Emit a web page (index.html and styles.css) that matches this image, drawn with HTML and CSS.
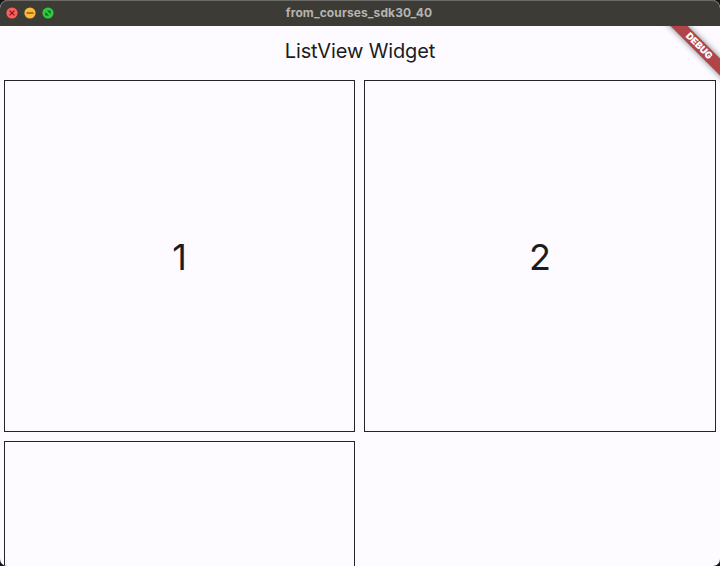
FILE: index.html
```html
<!DOCTYPE html>
<html lang="en">
<head>
<meta charset="utf-8">
<title>from_courses_sdk30_40</title>
<link rel="stylesheet" href="styles.css">
</head>
<body>
<div class="window">
  <header class="titlebar">
    <div class="controls">
      <svg class="control" viewBox="0 0 12 12"><circle cx="6" cy="6" r="5.6" fill="#fb5f5b"/><path d="M3.6 3.6l4.8 4.8M8.4 3.6l-4.8 4.8" stroke="#8c1716" stroke-width="1.3"/></svg>
      <svg class="control" viewBox="0 0 12 12"><circle cx="6" cy="6" r="5.6" fill="#fcb83a"/><path d="M2.5 6h7" stroke="#8f5910" stroke-width="1.4"/></svg>
      <svg class="control" viewBox="0 0 12 12"><circle cx="6" cy="6" r="5.6" fill="#2fc843"/><path d="M3.4 8.6V4.9l3.7 3.7zM4.9 3.4h3.7v3.7z" fill="#0c6519"/></svg>
    </div>
    <div class="window-title">from_courses_sdk30_40</div>
  </header>
  <main class="app">
    <h1 class="app-title"><span>ListView Widget</span></h1>
    <div class="grid">
      <div class="tile"><span>1</span></div>
      <div class="tile"><span>2</span></div>
      <div class="tile"></div>
    </div>
    <div class="banner">DEBUG</div>
  </main>
</div>
</body>
</html>
```
FILE: styles.css
```css
* { box-sizing: border-box; }
html, body { height: 100%; }
body {
  margin: 0;
  overflow: hidden;
  background: #16141a;
  font-family: Inter, "Liberation Sans", sans-serif;
  color: #1c1b20;
}
.window {
  height: 566px;
  display: flex;
  flex-direction: column;
  overflow: hidden;
  border-radius: 8px 8px 7px 7px;
  background: #fdfbff;
}
.titlebar {
  flex: none;
  height: 26px;
  display: grid;
  grid-template-columns: 60px 1fr 62px;
  align-items: center;
  background: #3c3b36;
  border-radius: 8px 8px 0 0;
  box-shadow: inset 0 1px 0 #6c6b67;
}
.controls { display: flex; gap: 6px; padding-left: 6px; }
.control { width: 12px; height: 12px; display: block; }
.window-title {
  text-align: center;
  font-size: 12px;
  line-height: 24px;
  font-weight: 700;
  letter-spacing: 0.1px;
  color: #b5b4b0;
}
.app {
  position: relative;
  flex: 1;
  min-height: 0;
  overflow: hidden;
}
.app-title {
  margin: 0;
  height: 50px;
  text-align: center;
  font-size: 20px;
  line-height: 50px;
  font-weight: 400;
  letter-spacing: -0.12px;
}
.grid {
  display: grid;
  grid-template-columns: 351px 352px;
  grid-auto-rows: 352px;
  gap: 9px;
  padding: 4px;
}
.tile {
  display: flex;
  align-items: center;
  justify-content: center;
  padding-top: 2px;
  border: 1px solid #252429;
  font-size: 36px;
}
.banner {
  position: absolute;
  left: 648.5px;
  top: 14px;
  width: 100px;
  height: 12px;
  transform: rotate(45deg);
  background: #b04449;
  box-shadow: 0 0 6px rgba(0, 0, 0, 0.5);
  color: #fff;
  text-align: center;
  font-size: 9.5px;
  line-height: 12px;
  font-weight: 900;
}
```
